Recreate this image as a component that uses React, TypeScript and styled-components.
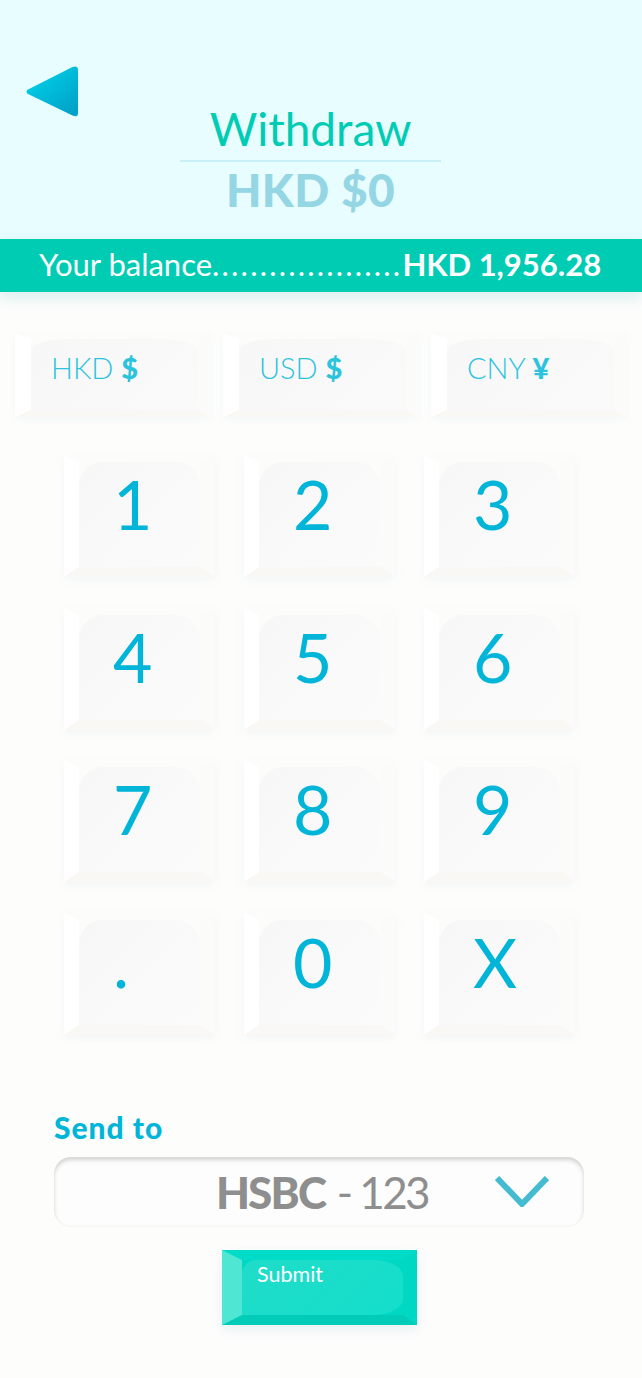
import { createGlobalStyle, styled } from "styled-components";

const GlobalStyle = createGlobalStyle`
  html, body {
    margin: 0;
    padding: 0;
    background: #fdfdfc;
    font-family: "Lato", "Noto Sans", sans-serif;
  }
`;

const currencies = [
  { code: "USD", sign: "$" },
  { code: "CNY", sign: "¥" },
];

const keys = ["1", "2", "3", "4", "5", "6", "7", "8", "9", ".", "0", "X"];

function App() {
  return (
    <Page>
      <GlobalStyle />
      <Header>
        <BackArrow viewBox="0 0 52 51" aria-label="Back">
          <defs>
            <linearGradient id="arrowFill" x1="0.2" y1="0.1" x2="0.9" y2="0.9">
              <stop offset="0" stopColor="#00cfe6" />
              <stop offset="1" stopColor="#00a2c8" />
            </linearGradient>
          </defs>
          <path
            d="M2 23.5 L46.5 1 Q52 -1 52 4 L52 47 Q52 52 46.5 49.5 L2 28 Q-1 25.7 2 23.5 Z"
            fill="url(#arrowFill)"
          />
        </BackArrow>
        <Title>
          <Heading>Withdraw</Heading>
          <Amount>HKD $0</Amount>
        </Title>
      </Header>

      <BalanceBar>
        <span>Your balance</span>
        <Dots>....................</Dots>
        <strong>HKD 1,956.28</strong>
      </BalanceBar>

      <CurrencyRow>
        <CurrencyKey>
          <CurrencyFace>
            HKD <b>$</b>
          </CurrencyFace>
        </CurrencyKey>
        {currencies.map((c) => (
          <CurrencyKey key={c.code}>
            <CurrencyFace>
              {c.code} <b>{c.sign}</b>
            </CurrencyFace>
          </CurrencyKey>
        ))}
      </CurrencyRow>

      <Keypad>
        {keys.map((k) => (
          <NumKey key={k}>
            <NumFace>{k}</NumFace>
          </NumKey>
        ))}
      </Keypad>

      <SendSection>
        <SendLabel>Send to</SendLabel>
        <Select>
          <SelectValue>
            <b>HSBC</b> - 123
          </SelectValue>
          <Chevron viewBox="0 0 54 31" aria-hidden="true">
            <path d="M2 2 L27 28 L52 2" fill="none" stroke="#44bbd0" strokeWidth="6" />
          </Chevron>
        </Select>
      </SendSection>

      <SubmitKey>
        <SubmitFace>Submit</SubmitFace>
      </SubmitKey>
    </Page>
  );
}

export default App;

const Page = styled.div`
  width: 642px;
  height: 1378px;
  overflow: hidden;
  background: #fdfdfc;
`;

const Header = styled.header`
  box-sizing: border-box;
  height: 239px;
  padding: 66px 47px 0 26px;
  background: #e8fdff;
  display: grid;
  grid-template-columns: 1fr auto 1fr;
  align-items: start;
`;

const BackArrow = styled.svg`
  width: 52px;
  height: 51px;
`;

const Title = styled.div`
  width: 261px;
  padding-top: 35px;
  display: flex;
  flex-direction: column;
  align-items: center;
`;

const Heading = styled.div`
  width: 100%;
  height: 59px;
  line-height: 56px;
  text-align: center;
  font-size: 46px;
  font-weight: 400;
  color: #00ccb4;
  border-bottom: 2px solid #c9f0f7;
`;

const Amount = styled.div`
  line-height: 56px;
  font-size: 46px;
  font-weight: 900;
  letter-spacing: 0.4px;
  color: #95d6e4;
`;

const BalanceBar = styled.div`
  position: relative;
  box-sizing: border-box;
  height: 53px;
  padding: 0 41px 3px 39px;
  display: flex;
  align-items: center;
  background: #00ccb4;
  color: #ffffff;
  font-size: 31px;
  line-height: 49px;
  font-weight: 400;
  white-space: nowrap;
  box-shadow: 0 6px 14px rgba(110, 195, 205, 0.25);

  strong {
    margin-left: auto;
    font-weight: 700;
  }
`;

const Dots = styled.span`
  letter-spacing: 2.2px;
`;

const CurrencyRow = styled.div`
  padding: 41px 16px 0 15px;
  display: grid;
  grid-template-columns: repeat(3, 195px);
  column-gap: 13px;
`;

const CurrencyKey = styled.div`
  box-sizing: border-box;
  height: 84px;
  border-style: solid;
  border-width: 6px 12px 7px 16px;
  border-color: #fcfcfb #fbfbf9 #f9f8f5 #ffffff;
  background: #fcfcfb;
  box-shadow: 0 3px 8px rgba(200, 215, 225, 0.16);
`;

const CurrencyFace = styled.div`
  box-sizing: border-box;
  height: 100%;
  padding: 8px 0 0 20px;
  border-radius: 36px 36px 0 0 / 12px 12px 0 0;
  background: linear-gradient(135deg, #f7f7f8, #fafafa);
  color: #2cc3dd;
  font-size: 29px;
  line-height: 42px;
  font-weight: 300;

  b {
    font-weight: 900;
  }
`;

const Keypad = styled.div`
  padding: 38px 0 0 64px;
  display: grid;
  grid-template-columns: repeat(3, 151px);
  grid-auto-rows: 122px;
  column-gap: 29px;
  row-gap: 30.5px;
`;

const NumKey = styled.div`
  box-sizing: border-box;
  border-style: solid;
  border-width: 7px 15px 10px 15px;
  border-color: #fcfcfb #fbfbf9 #f9f8f5 #ffffff;
  background: #fcfcfb;
  box-shadow: 0 3px 9px rgba(200, 215, 225, 0.18);
`;

const NumFace = styled.div`
  box-sizing: border-box;
  height: 100%;
  padding-left: 34px;
  border-radius: 24px 24px 2px 0;
  background: linear-gradient(135deg, #f7f7f8, #fbfbfb);
  color: #00b5d8;
  font-size: 68px;
  line-height: 84px;
  font-weight: 400;
`;

const SendSection = styled.section`
  padding: 74px 58px 0 54px;
`;

const SendLabel = styled.div`
  height: 36px;
  line-height: 36px;
  font-size: 30px;
  font-weight: 900;
  letter-spacing: 1px;
  color: #00b5d8;
`;

const Select = styled.div`
  box-sizing: border-box;
  height: 70px;
  margin-top: 12px;
  padding-right: 35px;
  display: flex;
  align-items: center;
  justify-content: flex-end;
  gap: 67px;
  border-radius: 17px;
  background: #fdfdfd;
  box-shadow: inset 0 3px 4px rgba(0, 0, 0, 0.17), inset 0 -1px 2px rgba(0, 0, 0, 0.03);
`;

const SelectValue = styled.div`
  font-size: 44px;
  font-weight: 400;
  color: #8e8e8e;
  letter-spacing: -2.6px;

  b {
    font-weight: 900;
    letter-spacing: -1.8px;
    margin-right: 3px;
  }
`;

const Chevron = styled.svg`
  width: 54px;
  height: 31px;
  flex: none;
`;

const SubmitKey = styled.div`
  box-sizing: border-box;
  width: 195px;
  height: 75px;
  margin: 23px 0 0 222px;
  border-style: solid;
  border-width: 10px 14px 10px 20px;
  border-color: #00dcc8 #00d8c3 #00ccb8 #4fe6d4;
  background: #00d8c3;
  box-shadow: 0 5px 12px rgba(190, 215, 225, 0.3);
`;

const SubmitFace = styled.div`
  box-sizing: border-box;
  height: 100%;
  padding-left: 15px;
  border-radius: 14px 30px 30px 0 / 14px 16px 16px 0;
  background: linear-gradient(135deg, #1fdcc9, #14dfcb);
  color: #ffffff;
  font-size: 21.5px;
  line-height: 28px;
  font-weight: 400;
`;
